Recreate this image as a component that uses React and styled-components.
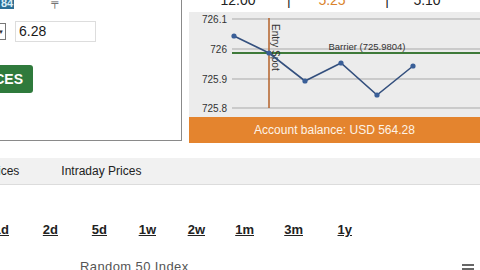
import React from "react";
import styled, { createGlobalStyle } from "styled-components";

const GlobalStyle = createGlobalStyle`
  html, body {
    margin: 0;
    padding: 0;
    background: #fff;
    font-family: "Liberation Sans", Arial, sans-serif;
    color: #222;
    overflow: hidden;
  }
`;

const Page = styled.div`
  width: 480px;
  height: 270px;
  overflow: hidden;
`;

const Top = styled.div`
  display: flex;
  height: 144px;
`;

const LeftPanel = styled.div`
  width: 182px;
  height: 140px;
  border-right: 1px solid #8a8a8a;
  border-bottom: 1px solid #8a8a8a;
  overflow: hidden;
`;

const FormBody = styled.div`
  margin-left: -60px;
  display: flex;
  flex-direction: column;
`;

const SelRow = styled.div`
  display: flex;
  align-items: center;
  height: 10px;
  gap: 37px;
`;

const Highlight = styled.span`
  display: inline-block;
  margin-left: 60px;
  margin-top: -4px;
  padding: 0 1px;
  background: #2b6f96;
  color: #d9eef8;
  font-size: 11px;
  line-height: 12px;
  font-weight: bold;
`;

const Cursor = styled.span`
  font-size: 10px;
  line-height: 10px;
  color: #555;
  margin-top: -4px;
`;

const InputRow = styled.div`
  display: flex;
  align-items: center;
  gap: 8px;
  margin-top: 11px;
`;

const Select = styled.div`
  width: 63px;
  height: 15px;
  border: 1px solid #777;
  display: flex;
  justify-content: flex-end;
  align-items: center;
  font-size: 6px;
  color: #333;
  padding-right: 1px;
`;

const Input = styled.div`
  width: 76px;
  height: 19px;
  border: 1px solid #ddd;
  font-size: 14px;
  line-height: 19px;
  padding-left: 3px;
  color: #1a1a1a;
  margin-left: 1px;
`;

const Button = styled.div`
  margin-top: 23px;
  width: 93px;
  height: 28px;
  background: #2f7a3c;
  border-radius: 3px;
  color: #fff;
  font-weight: bold;
  font-size: 14px;
  line-height: 28px;
  text-align: right;
  padding-right: 10px;
  box-sizing: border-box;
`;

const RightPanel = styled.div`
  flex: 1;
  margin-left: 7px;
  display: flex;
  flex-direction: column;
`;

const Stats = styled.div`
  height: 12px;
  overflow: hidden;
  display: flex;
  align-items: flex-end;
  font-size: 14px;
  line-height: 14px;
`;

const Stat = styled.span`
  position: relative;
  top: -5px;
  width: ${(p) => p.w}px;
  text-align: center;
  color: ${(p) => p.c || "#222"};
`;

const Chart = styled.div`
  height: 105px;
  background: #ececec;
`;

const Balance = styled.div`
  height: 26px;
  background: #e4842e;
  color: #fdf3e8;
  font-size: 12px;
  line-height: 26px;
  text-align: center;
`;

const Tabs = styled.div`
  margin-top: 14px;
  height: 26px;
  background: #f1f1f1;
  border-bottom: 1px solid #dcdcdc;
  display: flex;
  align-items: center;
  gap: 42px;
  font-size: 12px;
`;

const Tab = styled.span`
  color: #222;
  &:first-child {
    margin-left: -14px;
  }
`;

const Periods = styled.div`
  margin-top: 37px;
  display: flex;
  margin-left: -40px;
`;

const Period = styled.span`
  width: 49px;
  text-align: right;
  font-weight: bold;
  font-size: 13px;
  text-decoration: underline;
  color: #222;
  flex: none;
  box-sizing: border-box;
`;

const Footer = styled.div`
  margin-top: 21px;
  display: flex;
  align-items: center;
  justify-content: space-between;
  padding-left: 80px;
  padding-right: 6px;
`;

const IndexName = styled.span`
  font-size: 13px;
  color: #555;
  letter-spacing: 0.4px;
`;

const Burger = styled.div`
  width: 12px;
  display: flex;
  flex-direction: column;
  gap: 2px;
  margin-top: 6px;
  span {
    height: 2px;
    background: #666;
  }
`;

const points = [
  [45, 24],
  [80, 41],
  [116, 69],
  [152, 51],
  [188, 83],
  [224, 54],
];

const grid = [
  ["726.1", 7],
  ["726", 37],
  ["725.9", 67],
  ["725.8", 96],
];

const ChartSvg = () => (
  <svg width="291" height="105" viewBox="0 0 291 105">
    {grid.map(([label, y]) => (
      <g key={label}>
        <line x1="43" x2="291" y1={y} y2={y} stroke="#a9a9a9" strokeWidth="1" />
        <text x="38" y={y + 3.5} fontSize="10" textAnchor="end" fill="#333" fontFamily="Liberation Sans, Arial, sans-serif">
          {label}
        </text>
      </g>
    ))}
    <line x1="43" x2="291" y1="41" y2="41" stroke="#3f7a3a" strokeWidth="2" />
    <text x="178" y="38" fontSize="9.5" textAnchor="middle" fill="#333" fontFamily="Liberation Sans, Arial, sans-serif">
      Barrier (725.9804)
    </text>
    <line x1="80" x2="80" y1="6" y2="96" stroke="#b5622a" strokeWidth="1.5" />
    <text
      x="0"
      y="0"
      fontSize="10"
      fill="#333"
      fontFamily="Liberation Sans, Arial, sans-serif"
      transform="translate(83 12) rotate(90)"
    >
      Entry Spot
    </text>
    <polyline
      points={points.map((p) => p.join(",")).join(" ")}
      fill="none"
      stroke="#34507e"
      strokeWidth="1.6"
    />
    {points.map(([x, y]) => (
      <circle key={x} cx={x} cy={y} r="2.6" fill="#3a5f98" />
    ))}
  </svg>
);

const periods = ["1d", "2d", "5d", "1w", "2w", "1m", "3m", "1y"];

export default function App() {
  return (
    <Page>
      <GlobalStyle />
      <Top>
        <LeftPanel>
          <FormBody>
            <SelRow>
              <Highlight>84</Highlight>
              <Cursor>╤</Cursor>
            </SelRow>
            <InputRow>
              <Select>▼</Select>
              <Input>6.28</Input>
            </InputRow>
            <Button>PRICES</Button>
          </FormBody>
        </LeftPanel>
        <RightPanel>
          <Stats>
            <Stat w={98}>12:00</Stat>
            <Stat w={0}>|</Stat>
            <Stat w={90} c="#d9822b">5.25</Stat>
            <Stat w={20}>|</Stat>
            <Stat w={60}>5.10</Stat>
          </Stats>
          <Chart>
            <ChartSvg />
          </Chart>
          <Balance>Account balance: USD 564.28</Balance>
        </RightPanel>
      </Top>
      <Tabs>
        <Tab>Prices</Tab>
        <Tab>Intraday Prices</Tab>
      </Tabs>
      <Periods>
        {periods.map((p) => (
          <Period key={p}>{p}</Period>
        ))}
      </Periods>
      <Footer>
        <IndexName>Random 50 Index</IndexName>
        <Burger>
          <span />
          <span />
          <span />
        </Burger>
      </Footer>
    </Page>
  );
}
